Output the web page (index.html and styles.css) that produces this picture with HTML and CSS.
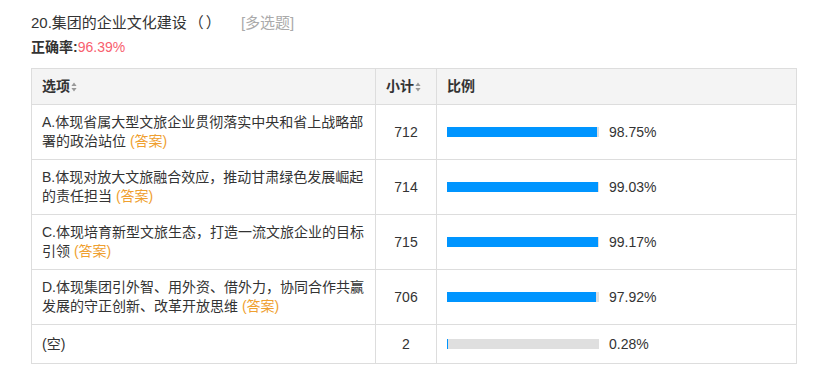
FILE: index.html
```html
<!DOCTYPE html>
<html lang="zh-CN">
<head>
<meta charset="utf-8">
<title>第20题统计</title>
<link rel="stylesheet" href="styles.css">
</head>
<body>
<div class="question">
  <div class="q-title">20.集团的企业文化建设<span class="paren">（）</span><span class="q-type">[多选题]</span></div>
  <div class="q-rate">正确率:<span class="rate-val">96.39%</span></div>
  <table class="stat">
    <colgroup>
      <col class="c-opt">
      <col class="c-num">
      <col class="c-pct">
    </colgroup>
    <thead>
      <tr>
        <th>选项<svg class="sort" width="6" height="10" viewBox="0 0 6 10"><path d="M3 0.5L5.6 4H0.4Z M3 9.5L5.6 6H0.4Z" fill="#999"/></svg></th>
        <th>小计<svg class="sort" width="6" height="10" viewBox="0 0 6 10"><path d="M3 0.5L5.6 4H0.4Z M3 9.5L5.6 6H0.4Z" fill="#999"/></svg></th>
        <th>比例</th>
      </tr>
    </thead>
    <tbody>
      <tr>
        <td class="opt">A.体现省属大型文旅企业贯彻落实中央和省上战略部署的政治站位 <span class="ans">(答案)</span></td>
        <td class="num">712</td>
        <td class="pct"><div class="pct-wrap"><div class="bar"><div class="fill" style="width:98.75%"></div></div><span class="pct-text">98.75%</span></div></td>
      </tr>
      <tr>
        <td class="opt">B.体现对放大文旅融合效应，推动甘肃绿色发展崛起的责任担当 <span class="ans">(答案)</span></td>
        <td class="num">714</td>
        <td class="pct"><div class="pct-wrap"><div class="bar"><div class="fill" style="width:99.03%"></div></div><span class="pct-text">99.03%</span></div></td>
      </tr>
      <tr>
        <td class="opt">C.体现培育新型文旅生态，打造一流文旅企业的目标引领 <span class="ans">(答案)</span></td>
        <td class="num">715</td>
        <td class="pct"><div class="pct-wrap"><div class="bar"><div class="fill" style="width:99.17%"></div></div><span class="pct-text">99.17%</span></div></td>
      </tr>
      <tr>
        <td class="opt">D.体现集团引外智、用外资、借外力，协同合作共赢发展的守正创新、改革开放思维 <span class="ans">(答案)</span></td>
        <td class="num">706</td>
        <td class="pct"><div class="pct-wrap"><div class="bar"><div class="fill" style="width:97.92%"></div></div><span class="pct-text">97.92%</span></div></td>
      </tr>
      <tr class="empty-row">
        <td class="opt">(空)</td>
        <td class="num">2</td>
        <td class="pct"><div class="pct-wrap"><div class="bar"><div class="fill" style="width:0.28%"></div></div><span class="pct-text">0.28%</span></div></td>
      </tr>
    </tbody>
  </table>
</div>
</body>
</html>
```

FILE: styles.css
```css
html, body {
  margin: 0;
  padding: 0;
  background: #fff;
}
body {
  font-family: "Liberation Sans", "Noto Sans CJK SC", sans-serif;
  color: #333;
}
.question {
  padding: 12px 0 0 31px;
}
.q-title {
  font-size: 15px;
  line-height: 21px;
  color: #333;
}
.paren {
  margin-left: 2px;
  letter-spacing: 2px;
}
.q-type {
  margin-left: 18px;
  color: #aaa;
}
.q-rate {
  margin-top: 4px;
  font-size: 14px;
  line-height: 20px;
  font-weight: bold;
  color: #333;
}
.rate-val {
  font-weight: normal;
  color: #f8606e;
}
.stat {
  margin-top: 11px;
  width: 765px;
  table-layout: fixed;
  border-collapse: collapse;
  border: 1px solid #ddd;
  font-size: 14px;
  line-height: 19px;
}
.c-opt { width: 344px; }
.c-num { width: 61px; }
.c-pct { width: 360px; }
.stat th,
.stat td {
  border: 1px solid #ddd;
  padding: 8px 10px;
  vertical-align: middle;
}
.stat th {
  background: #f4f4f4;
  font-weight: bold;
  text-align: left;
  color: #333;
}
.sort {
  margin-left: 1px;
  vertical-align: -1px;
}
.stat td.num {
  text-align: center;
  padding: 8px 0;
}
.stat td.pct {
  padding: 8px 10px;
}
.ans {
  color: #efa030;
}
.pct-wrap {
  display: flex;
  align-items: center;
}
.bar {
  width: 152px;
  height: 10px;
  background: #dfdfdf;
  flex: none;
}
.fill {
  height: 100%;
  background: #0095ff;
}
.pct-text {
  margin-left: 10px;
}
.empty-row td {
  height: 22px;
}
```
